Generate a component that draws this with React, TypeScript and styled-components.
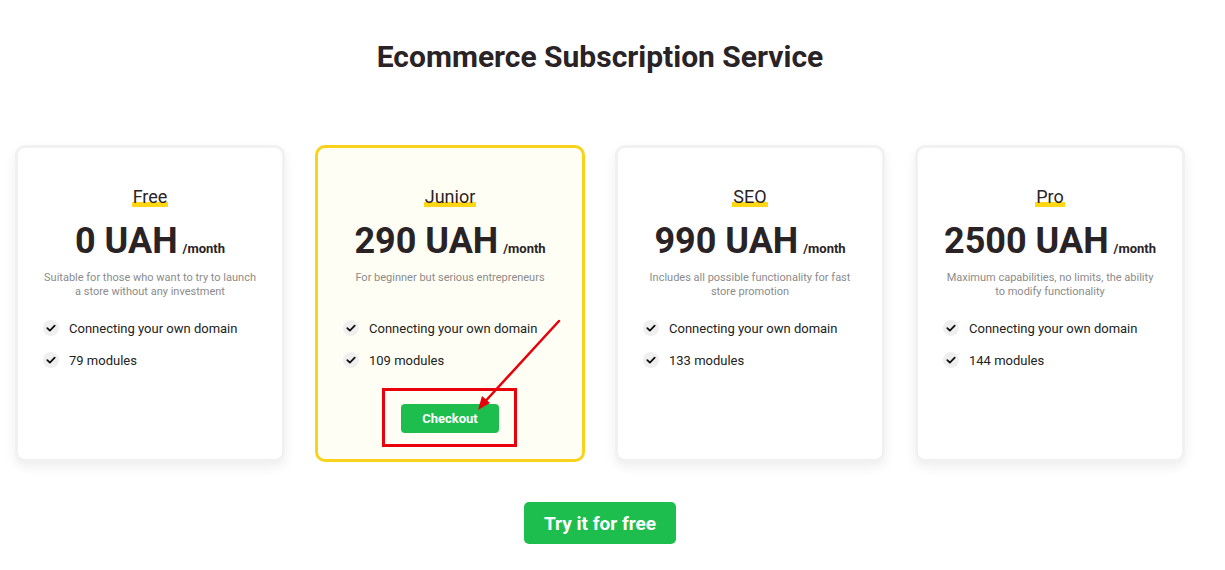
import React from "react";
import styled, { createGlobalStyle } from "styled-components";

const GlobalStyle = createGlobalStyle`
  html, body { margin: 0; padding: 0; background: #ffffff; }
  body { font-family: Roboto, "Liberation Sans", Arial, sans-serif; color: #2a2326; }
  * { box-sizing: border-box; }
`;

const Page = styled.div`
  width: 1200px;
  padding-top: 40px;
  display: flex;
  flex-direction: column;
  align-items: center;
`;

const Title = styled.h1`
  margin: 0;
  font-size: 30px;
  line-height: 34px;
  font-weight: 700;
  color: #2a2326;
  text-align: center;
`;

const CardsRow = styled.div`
  margin-top: 71px;
  display: flex;
  justify-content: center;
  align-items: stretch;
  gap: 30px;
`;

const Card = styled.div<{ $featured?: boolean }>`
  position: relative;
  width: 270px;
  min-height: 317px;
  padding: 38px 0 24px;
  border-radius: 10px;
  border: 3px solid ${(p) => (p.$featured ? "#f8d31a" : "#f1f1f1")};
  background: ${(p) => (p.$featured ? "#fffef4" : "#ffffff")};
  box-shadow: ${(p) => (p.$featured ? "none" : "0 5px 12px rgba(0, 0, 0, 0.07)")};
  display: flex;
  flex-direction: column;
  align-items: center;
`;

const PlanName = styled.div`
  font-size: 18px;
  line-height: 22px;
  color: #2a2326;
`;

const Highlight = styled.span`
  padding: 0 1px;
  background: linear-gradient(to bottom, transparent 77%, #ffd714 77%, #ffd714 100%);
`;

const PriceLine = styled.div`
  margin-top: 12px;
  display: flex;
  align-items: baseline;
  gap: 5px;
  white-space: nowrap;
`;

const Price = styled.span`
  font-size: 36px;
  line-height: 42px;
  font-weight: 700;
  color: #2a2326;
`;

const Period = styled.span`
  font-size: 13px;
  font-weight: 700;
  color: #2a2326;
`;

const Description = styled.p`
  margin: 9px 0 0;
  min-height: 27px;
  max-width: 214px;
  font-size: 11px;
  line-height: 13.5px;
  color: #8b8b8b;
  text-align: center;
`;

const Features = styled.ul`
  align-self: stretch;
  list-style: none;
  margin: 20px 0 0;
  padding: 0 25px;
  display: flex;
  flex-direction: column;
  gap: 12px;
`;

const Feature = styled.li`
  display: flex;
  align-items: center;
  gap: 10px;
  height: 20px;
  font-size: 13px;
  color: #222222;
`;

const CheckBadge = styled.span`
  width: 16px;
  height: 16px;
  border-radius: 50%;
  background: #efefef;
  display: flex;
  align-items: center;
  justify-content: center;
  flex-shrink: 0;
`;

const CheckoutButton = styled.button`
  margin-top: 34px;
  width: 98px;
  height: 29px;
  border: none;
  border-radius: 4px;
  background: #1ebe4e;
  color: #ffffff;
  font-family: Roboto, "Liberation Sans", Arial, sans-serif;
  font-size: 13px;
  font-weight: 700;
  cursor: pointer;
`;

const AnnotationBox = styled.div`
  position: absolute;
  left: 64px;
  top: 240px;
  width: 135px;
  height: 59px;
  border: 3px solid #e8000b;
  pointer-events: none;
`;

const AnnotationArrow = styled.svg`
  position: absolute;
  left: -3px;
  top: -3px;
  width: 270px;
  height: 317px;
  pointer-events: none;
  overflow: visible;
`;

const TryButton = styled.button`
  margin-top: 40px;
  width: 152px;
  height: 42px;
  border: none;
  border-radius: 5px;
  background: #1ebe4e;
  color: #ffffff;
  font-family: Roboto, "Liberation Sans", Arial, sans-serif;
  font-size: 19px;
  font-weight: 700;
  cursor: pointer;
`;

const Check = () => (
  <svg width="10" height="10" viewBox="0 0 10 10">
    <path d="M1.3 5.2 L3.9 7.6 L8.7 2.6" fill="none" stroke="#111" strokeWidth="1.8" strokeLinecap="round" strokeLinejoin="round" />
  </svg>
);

type Plan = {
  name: string;
  price: string;
  description: string;
  domain: string;
  modules: string;
  featured?: boolean;
};

const plans: Plan[] = [
  {
    name: "Free",
    price: "0 UAH",
    description: "Suitable for those who want to try to launch a store without any investment",
    domain: "Connecting your own domain",
    modules: "79 modules",
  },
  {
    name: "Junior",
    price: "290 UAH",
    description: "For beginner but serious entrepreneurs",
    domain: "Connecting your own domain",
    modules: "109 modules",
    featured: true,
  },
  {
    name: "SEO",
    price: "990 UAH",
    description: "Includes all possible functionality for fast store promotion",
    domain: "Connecting your own domain",
    modules: "133 modules",
  },
  {
    name: "Pro",
    price: "2500 UAH",
    description: "Maximum capabilities, no limits, the ability to modify functionality",
    domain: "Connecting your own domain",
    modules: "144 modules",
  },
];

export default function App() {
  return (
    <>
      <GlobalStyle />
      <Page>
        <Title>Ecommerce Subscription Service</Title>
        <CardsRow>
          {plans.map((plan) => (
            <Card key={plan.name} $featured={plan.featured}>
              <PlanName>
                <Highlight>{plan.name}</Highlight>
              </PlanName>
              <PriceLine>
                <Price>{plan.price}</Price>
                <Period>/month</Period>
              </PriceLine>
              <Description>{plan.description}</Description>
              <Features>
                <Feature>
                  <CheckBadge>
                    <Check />
                  </CheckBadge>
                  {plan.domain}
                </Feature>
                <Feature>
                  <CheckBadge>
                    <Check />
                  </CheckBadge>
                  {plan.modules}
                </Feature>
              </Features>
              {plan.featured && (
                <>
                  <CheckoutButton>Checkout</CheckoutButton>
                  <AnnotationBox />
                  <AnnotationArrow viewBox="0 0 270 317">
                    <line x1="244" y1="176" x2="166" y2="261" stroke="#e8000b" strokeWidth="2.5" strokeLinecap="round" />
                    <polygon points="163,265 167,251 175,258" fill="#e8000b" />
                  </AnnotationArrow>
                </>
              )}
            </Card>
          ))}
        </CardsRow>
        <TryButton>Try it for free</TryButton>
      </Page>
    </>
  );
}
